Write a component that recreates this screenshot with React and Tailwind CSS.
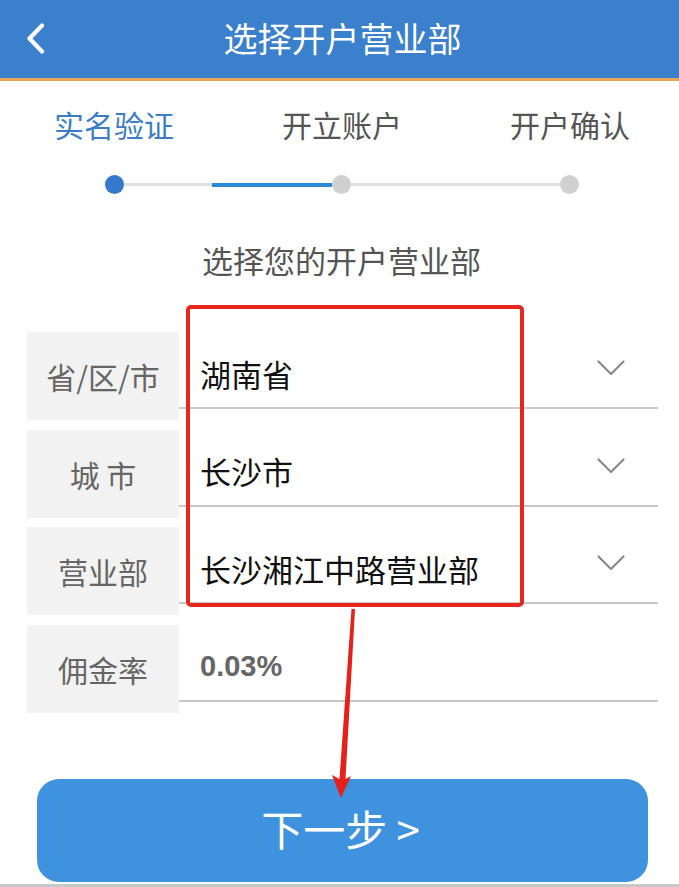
import React from 'react';

const cjk = { fontFamily: '"Noto Sans CJK SC", "Noto Sans", sans-serif' };

const steps = [
	{ label: '实名验证', active: true },
	{ label: '开立账户', active: false },
	{ label: '开户确认', active: false },
];

const rows = [
	{ label: '省/区/市', value: '湖南省', select: true },
	{ label: '城 市', value: '长沙市', select: true },
	{ label: '营业部', value: '长沙湘江中路营业部', select: true },
	{ label: '佣金率', value: '0.03%', select: false },
];

function ChevronDown() {
	return (
		<svg width="28" height="17" viewBox="0 0 28 17" fill="none">
			<path d="M1.5 1.5 L14 14 L26.5 1.5" stroke="#8a8a8a" strokeWidth="2.2" strokeLinecap="round" strokeLinejoin="round" />
		</svg>
	);
}

function FormRow({ label, value, select }) {
	return (
		<div className="flex items-start">
			<div className="w-[152px] h-[88px] bg-[#f2f2f2] flex items-center justify-center text-[30px] leading-[36px] text-[#666]">
				{label}
			</div>
			<div className="flex-1 h-[77px] pt-[8px] flex items-center justify-between border-b-2 border-[#c8c8c8] pl-[21px] pr-[33px]">
				{select ? (
					<span className="text-[31px] leading-[36px] text-[#111]">{value}</span>
				) : (
					<span className="text-[29px] leading-[36px] font-bold text-[#666]" style={{ fontFamily: '"Liberation Sans", Arial, sans-serif' }}>{value}</span>
				)}
				{select && <div className="-mt-[10px]"><ChevronDown /></div>}
			</div>
		</div>
	);
}

export default function App() {
	return (
		<div className="relative w-[679px] h-[887px] overflow-hidden bg-white" style={cjk}>
			{/* header */}
			<div className="relative h-[81px] bg-[#3a80cc] border-b-[3px] border-[#eaa257] flex items-center justify-center">
				<svg className="absolute left-[26px] top-[23px]" width="19" height="31" viewBox="0 0 19 31" fill="none">
					<path d="M16 2.5 L3.5 15.5 L16 28.5" stroke="white" strokeWidth="4.2" strokeLinecap="round" strokeLinejoin="round" />
				</svg>
				<h1 className="text-[34px] leading-[40px] text-white ml-[6px] -mt-[2px]">选择开户营业部</h1>
			</div>

			{/* steps */}
			<div className="flex mt-[25px]">
				{steps.map((s) => (
					<div key={s.label} className={`w-[228px] shrink-0 text-center text-[30px] leading-[36px] ${s.active ? 'text-[#3b7dc6]' : 'text-[#555]'}`}>
						{s.label}
					</div>
				))}
			</div>

			<div className="flex items-center mt-[33px] ml-[105px] h-[19px]">
				<div className="w-[19px] h-[19px] rounded-full bg-[#3579cc] shrink-0" />
				<div className="w-[88px] h-[3px] bg-[#e0e0e0]" />
				<div className="w-[120px] h-[4px] bg-[#2a8ad8]" />
				<div className="w-[19px] h-[19px] rounded-full bg-[#d0d0d0] shrink-0" />
				<div className="w-[209px] h-[3px] bg-[#e0e0e0]" />
				<div className="w-[19px] h-[19px] rounded-full bg-[#d0d0d0] shrink-0" />
			</div>

			<p className="mt-[48px] text-center text-[31px] leading-[36px] text-[#555] ml-[4px]">选择您的开户营业部</p>

			{/* form */}
			<div className="mt-[54px] ml-[27px] mr-[21px] flex flex-col gap-[9.5px]">
				{rows.map((r) => (
					<FormRow key={r.label} {...r} />
				))}
			</div>

			{/* button */}
			<div className="mt-[66px] ml-[37px] mr-[31px] h-[103px] rounded-[22px] bg-[#3f92de] flex items-center justify-center">
				<span className="text-[42px] leading-[50px] text-white -mt-[4px] -ml-[4px]">下一步 &gt;</span>
			</div>
			<div className="mt-[2px] h-[3px] bg-[#c8c8c8]" />

			{/* annotation overlay */}
			<div className="absolute left-[186px] top-[305px] w-[338px] h-[302px] border-[4px] border-[#e8261c] rounded-[5px]" />
			<svg className="absolute left-0 top-0 pointer-events-none" width="679" height="887" viewBox="0 0 679 887">
				<polygon points="351.5,609 355,609 345.5,779 351,776 341,798 332,775 339.5,779" fill="#e8201a" />
			</svg>
		</div>
	);
}
